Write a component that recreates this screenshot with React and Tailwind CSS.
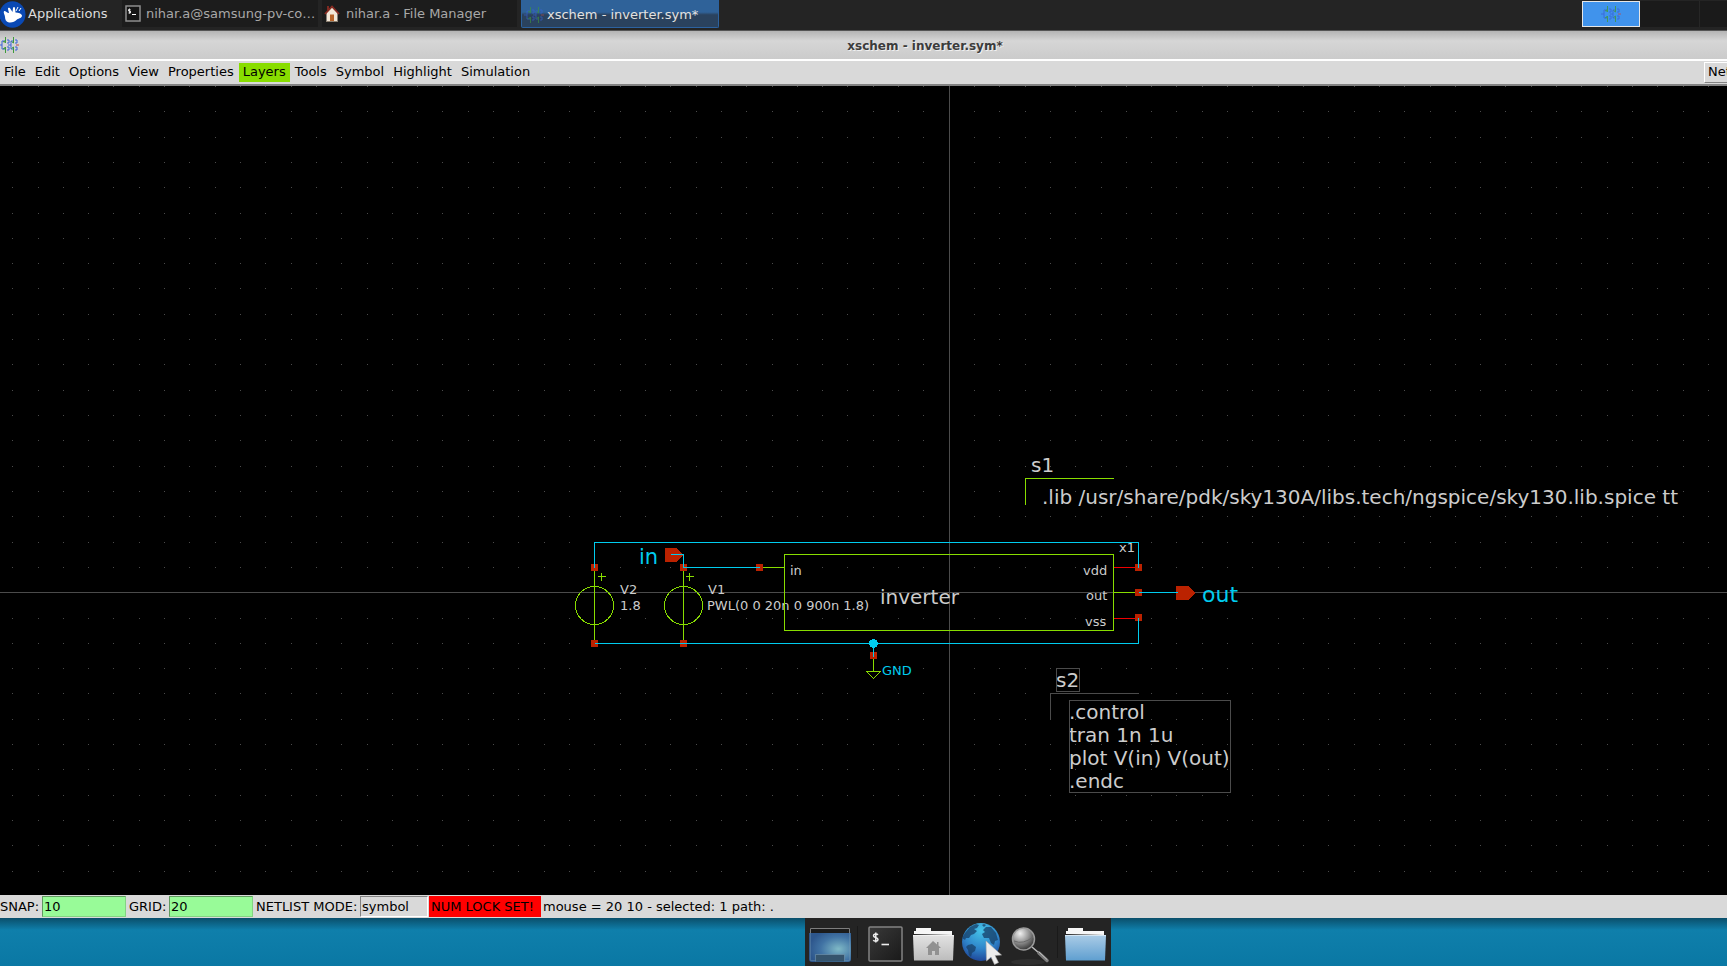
import React from "react";

const GREEN = "#88dd00";
const CYAN = "#00ccee";
const PIN = "#bb2200";
const GREY = "#4b4b4b";
const TEXT = "#cccccc";

const MENUS = ["File", "Edit", "Options", "View", "Properties", "Layers", "Tools", "Symbol", "Highlight", "Simulation"];

const STEP = 25.31;
const COLS = Array.from({ length: 110 }, (_, i) => Math.floor(12.7 + i * STEP));
const ROWS = Array.from({ length: 60 }, (_, i) => Math.floor(0.5 + i * STEP));

const PINS = [
  [594, 481], [594, 557], [683, 481], [683, 557], [759, 481],
  [1138, 481], [1138, 506], [1138, 531], [873, 569],
];

const LABELS = [
  { x: 620, y: 508, t: "V2" },
  { x: 620, y: 524, t: "1.8" },
  { x: 708, y: 508, t: "V1" },
  { x: 707, y: 524, t: "PWL(0 0 20n 0 900n 1.8)" },
  { x: 790, y: 489, t: "in" },
  { x: 1083, y: 489, t: "vdd" },
  { x: 1086, y: 514, t: "out" },
  { x: 1085, y: 540, t: "vss" },
  { x: 1119, y: 466, t: "x1" },
  { x: 882, y: 589, t: "GND", fill: CYAN },
  { x: 880, y: 518, t: "inverter", size: 20 },
  { x: 639, y: 478, t: "in", fill: CYAN, size: 21 },
  { x: 1202, y: 516, t: "out", fill: CYAN, size: 22 },
  { x: 1031, y: 386, t: "s1", size: 20 },
  { x: 1042, y: 418, t: ".lib /usr/share/pdk/sky130A/libs.tech/ngspice/sky130.lib.spice tt", size: 20 },
  { x: 1056, y: 601, t: "s2", size: 20 },
  { x: 1069, y: 633, t: ".control", size: 20 },
  { x: 1069, y: 656, t: "tran 1n 1u", size: 20 },
  { x: 1069, y: 679, t: "plot V(in) V(out)", size: 20 },
  { x: 1069, y: 702, t: ".endc", size: 20 },
];

function XschemIcon({ className }) {
  return (
    <svg className={className} width="20" height="16" viewBox="0 0 20 16" fill="none" aria-hidden="true">
      <path d="M0 8h3M3 4v8M3 4h3M3 12h3M8 3h2v3H8M8 10h2v3H8M9 8h3M12 4v8M12 4h2M12 12h2M16 3h2v3h-2M16 10h2v3h-2" stroke="#3b63d8" />
      <path d="M6.500 0v6l-1.500-1.500M6.500 16v-6l-1.500 1.500M6 4l-2 1M6 11l-2 1M14.500 0v6l-2-1.500M14.500 16v-6l-2 1.500" stroke="#3f9a3a" />
      <path d="M17 8h3" stroke="#c04a4a" />
    </svg>
  );
}

function MouseLogo() {
  return (
    <svg width="26" height="27" viewBox="0 0 26 27" aria-hidden="true" className="shrink-0">
      <ellipse cx="12.500" cy="13.500" rx="13" ry="13.200" fill="#0a49b4" />
      <path d="M4 10c2 0 3 2 5 2l-1-4c0-2 2-1 2.500 0l2 3 .5-4c.5-1.500 2-1 2 .5l.5 4c3 0 6 1 6.500 3 .3 2-3 3-5 4-2 2-5 3.500-8 3-3-.5-4-3-4-5.500 0-2-2-4-1-6z" fill="#fff" />
      <path d="M16 10l2-4M19 10l2-3" stroke="#fff" strokeWidth="1" />
    </svg>
  );
}

function SmallTerminal() {
  return (
    <svg width="16" height="17" viewBox="0 0 16 17" aria-hidden="true" className="shrink-0">
      <rect x="1" y="1" width="14" height="15" fill="#151515" stroke="#8d8d8d" strokeWidth="1.500" />
      <path d="M5.500 4.500H3.500v1.500h2v2h-2M4.500 3.500v5" stroke="#ddd" fill="none" />
      <path d="M7 9.500h4" stroke="#fff" />
    </svg>
  );
}

function House() {
  return (
    <svg width="16" height="17" viewBox="0 0 16 17" aria-hidden="true" className="shrink-0">
      <path d="M3 1h2v4H3z" fill="#7c2a22" />
      <path d="M2.500 8L8 2.500 13.500 8v8h-11z" fill="#f3e7d8" />
      <path d="M1 9l7-7.500L15 9" stroke="#8a2b22" strokeWidth="1.800" fill="none" />
      <path d="M6 9.500h4V16H6z" fill="#b8642a" />
      <path d="M2 16.500h12" stroke="#8b7f70" />
    </svg>
  );
}

function Folder({ blue, home }) {
  const id = blue ? "fb" : "fg";
  return (
    <svg width="42" height="36" viewBox="0 0 42 36" aria-hidden="true">
      <defs>
        <linearGradient id={id} x1="0" y1="0" x2="0" y2="1">
          <stop offset="0" stopColor={blue ? "#a9cbe6" : "#e2e2e2"} />
          <stop offset="1" stopColor={blue ? "#5f9fd0" : "#bcbcbc"} />
        </linearGradient>
      </defs>
      <path d="M1 8V5h2V2h15v3h21v4z" fill="#f6f6f6" />
      <path d="M0 9h41v2H0z" fill="#fff" />
      <path d="M0 9.500h41l-1 25H1z" fill={"url(#" + id + ")"} />
      {home && <path d="M20 15l-7 7h2v7h4v-4h3v4h4v-7h2l-2.500-2.500V16H24v2.500z" fill="#919191" />}
    </svg>
  );
}

function ShowDesktop() {
  return (
    <svg width="42" height="36" viewBox="0 0 42 36" aria-hidden="true">
      <defs>
        <radialGradient id="sd" cx=".7" cy=".55" r=".7">
          <stop offset="0" stopColor="#7fb9c6" />
          <stop offset=".6" stopColor="#4173a4" />
          <stop offset="1" stopColor="#2d568c" />
        </radialGradient>
      </defs>
      <path d="M1.500 7V1.500h39V7" fill="#1b1b1b" stroke="#7d7d7d" />
      <path d="M0 6h42v26q0 3-3 3H3q-3 0-3-3z" fill="url(#sd)" />
      <path d="M1.500 6v27.500h39V6" stroke="#7ea0b8" strokeOpacity=".35" fill="none" />
      <path d="M6.500 34.500v-7h29v7" fill="#35546d" stroke="#7fa0b5" strokeOpacity=".5" />
    </svg>
  );
}

function Terminal() {
  return (
    <svg width="36" height="36" viewBox="0 0 36 36" aria-hidden="true">
      <defs>
        <linearGradient id="tm" x1="0" y1="0" x2="1" y2="1">
          <stop offset="0" stopColor="#3a3a3a" />
          <stop offset="1" stopColor="#191919" />
        </linearGradient>
      </defs>
      <rect x="1" y="1" width="33" height="34" rx="1" fill="url(#tm)" stroke="#838383" strokeWidth="1.500" />
      <path d="M10 8.800C9 7.600 5.500 7.600 5.500 9.700s4.500 1.500 4.500 3.700-3.500 2.200-4.800.9M7.800 6.500v10" stroke="#eee" strokeWidth="1.500" fill="none" />
      <path d="M13.500 18.500h7.500" stroke="#eee" strokeWidth="1.600" />
    </svg>
  );
}

function Globe() {
  return (
    <svg width="44" height="44" viewBox="0 0 44 44" aria-hidden="true">
      <defs>
        <radialGradient id="gl" cx=".5" cy=".2" r=".85">
          <stop offset="0" stopColor="#45c3e8" />
          <stop offset=".55" stopColor="#2f86cb" />
          <stop offset="1" stopColor="#1d3f93" />
        </radialGradient>
      </defs>
      <circle cx="20" cy="20" r="19" fill="url(#gl)" />
      <path d="M4 11l5-6 6-3 3 1-2 3-3 1 3 2-3 3-3 1-2 3-3 0-1 2-3-2zM7 23l4-1 4 3-1 4-3 2-1 4-2-2-1-5-2-3zM22 8l3-3 5 0 5 6 2 7-3 1-1 4-3-2-2-5-5 0-2-4 3-2zM21 3l2-1 2 1-2 2z" fill="#173f67" fillOpacity=".75" />
      <path d="M25 19l.5 20 4.500-4 3.500 7.500 4-2-3.500-7 6.500-.5z" fill="#ececec" stroke="#a9a9a9" strokeWidth=".6" />
    </svg>
  );
}

function Magnifier() {
  return (
    <svg width="40" height="40" viewBox="0 0 40 40" aria-hidden="true">
      <defs>
        <radialGradient id="mg" cx=".35" cy=".25" r=".75">
          <stop offset="0" stopColor="#f0f0f0" />
          <stop offset=".5" stopColor="#9a9a9a" />
          <stop offset="1" stopColor="#3c3c3c" />
        </radialGradient>
      </defs>
      <ellipse cx="17" cy="36" rx="17" ry="3" fill="#2f2f2f" />
      <path d="M21 21l7 6" stroke="#bdbdbd" strokeWidth="1.500" />
      <path d="M28 27l8 7.500" stroke="#7c7c7c" strokeWidth="3.500" strokeLinecap="round" />
      <path d="M28 26l8 7.500" stroke="#c6c6c6" strokeWidth="1" strokeLinecap="round" />
      <circle cx="12.500" cy="13" r="11" fill="url(#mg)" stroke="#9a9a9a" strokeWidth="1.500" />
      <path d="M3 15q9 4 19-4" stroke="#6a6a6a" fill="none" />
    </svg>
  );
}

function Taskbar() {
  return (
    <header className="flex h-[31px] shrink-0 items-start border-b border-[#555555] bg-[#242424] text-[#c4c4c4]">
      <button type="button" className="flex h-[28px] w-[122px] shrink-0 items-center gap-0.5 text-[#dcdcdc]">
        <MouseLogo />
        Applications
      </button>
      <nav className="flex gap-1" aria-label="Windows">
        <button type="button" className="flex h-[27px] w-[196px] items-center gap-[5px] overflow-hidden bg-[#1c1c1c] px-[3px] whitespace-nowrap text-[#a8a8a8]">
          <SmallTerminal />
          nihar.a@samsung-pv-co…
        </button>
        <button type="button" className="flex h-[27px] w-[195px] items-center gap-1.5 overflow-hidden bg-[#1c1c1c] px-[2px] whitespace-nowrap text-[#a8a8a8]">
          <House />
          nihar.a - File Manager
        </button>
        <button type="button" className="flex h-[28px] w-[198px] items-center gap-[3px] overflow-hidden rounded-b-xs border border-t-0 border-[#2c62a0] bg-linear-to-b from-[#2f6299] from-45% to-[#2a425e] to-55% px-0.5 pt-0.5 whitespace-nowrap text-[#e2e2e2]">
          <XschemIcon className="shrink-0 opacity-60" />
          xschem - inverter.sym*
        </button>
      </nav>
      <div className="ml-auto flex h-[28px] pt-px">
        <button type="button" aria-label="Workspace 1" className="flex h-[26px] w-[58px] items-center justify-center border border-[#e6e6e6] bg-[#4093ec]">
          <XschemIcon className="opacity-80" />
        </button>
        <button type="button" aria-label="Workspace 2" className="h-[26px] w-[60px] border-r border-[#262626] bg-[#1a1a1a]" />
        <button type="button" aria-label="Workspace 3" className="h-[26px] w-[27px] bg-[#1a1a1a]" />
      </div>
    </header>
  );
}

function TitleBar() {
  return (
    <div className="flex h-[30px] shrink-0 items-center border-b-2 border-white bg-linear-to-b from-[#b4b4b4] via-[#d6d6d6] via-35% to-[#cbcbcb]">
      <XschemIcon className="-ml-px shrink-0" />
      <h1 className="grow pt-0.5 pl-[104px] text-center text-xs font-bold text-[#3c3c3c] [text-shadow:1px_1px_0_#f0f0f0]">xschem - inverter.sym*</h1>
    </div>
  );
}

function MenuBar() {
  return (
    <nav className="flex h-[25px] shrink-0 items-center gap-px overflow-hidden border-b-2 border-[#828282] bg-[#d9d9d9] text-black" aria-label="Menu">
      {MENUS.map((m) => (
        <button
          key={m}
          type="button"
          className={m === "Layers" ? "h-[19px] shrink-0 bg-[#88dd00] px-1 pb-0.5" : "h-[19px] shrink-0 px-1 pb-0.5"}
        >
          {m}
        </button>
      ))}
      <button type="button" className="-mr-[37px] ml-auto h-[21px] w-[60px] shrink-0 border border-t-white border-r-[#828282] border-b-[#828282] border-l-white pb-0.5 pl-[3px] text-left">
        Netlist
      </button>
    </nav>
  );
}

function Schematic() {
  return (
    <main className="relative min-h-[700px] grow overflow-hidden bg-black">
      <svg className="absolute inset-0 h-full w-full font-['DejaVu_Sans',sans-serif]" role="img" aria-label="Schematic">
        <g fill="#4b4b4b" shapeRendering="crispEdges">
          {ROWS.map((y) => COLS.map((x) => <rect key={x + "-" + y} x={x} y={y} width="1" height="1" />))}
          <rect x="949" y="0" width="1" height="100%" />
          <rect x="0" y="506" width="100%" height="1" />
        </g>
        {LABELS.map((l) => (
          <text key={l.x + "-" + l.y} x={l.x} y={l.y} fontSize={l.size || 13} fill={l.fill || TEXT}>
            {l.t}
          </text>
        ))}
        <g transform="translate(.5 .5)" fill="none" shapeRendering="crispEdges">
          <g stroke={GREEN}>
            <path d="M594 481V557M683 481V557M759 481H784M1113 506H1138" />
            <rect x="784" y="468" width="329" height="76" />
            <circle cx="594" cy="519" r="19" />
            <circle cx="683" cy="519" r="19" />
            <path d="M597 490h8M601 486v8M685 490h8M689 486v8" />
            <path d="M873 569V585M866 585H880L873 592Z" />
            <path d="M1025 418V392H1113" />
          </g>
          <path d="M1113 481H1138M1113 532H1138" stroke="#f00000" />
          <g stroke={GREY}>
            <path d="M1050 633V607H1138" />
            <rect x="1056" y="582" width="23" height="23" />
            <rect x="1069" y="614" width="161" height="92" />
          </g>
          <g fill={PIN}>
            {PINS.map(([x, y]) => (
              <rect key={x + "-" + y} x={x - 3.5} y={y - 3.5} width="7" height="7" />
            ))}
            <path d="M664.500 461.500h11l8 7-8 7h-11z" />
            <path d="M1175.500 499.500h12l8 7-8 7h-12z" />
          </g>
          <path d="M594 481V456H1138V481M594 557H1138V531M683 481H759M670 468H683V481M1138 506H1177M873 557V570" stroke={CYAN} />
          <circle cx="873" cy="557" r="4.500" fill={CYAN} />
        </g>
      </svg>
    </main>
  );
}

function StatusBar() {
  const green = "h-[21px] border border-t-[#5f9a5f] border-r-[#83d383] border-b-[#83d383] border-l-[#5f9a5f] bg-[#98fb98] pl-px outline-none";
  return (
    <footer className="flex h-[23px] shrink-0 items-center bg-[#d9d9d9] whitespace-nowrap text-black">
      <label className="flex w-[129px] items-center justify-between pr-[3px]">
        SNAP:
        <input className={green + " w-[84px]"} defaultValue="10" />
      </label>
      <label className="flex w-[127px] items-center justify-between pr-[3px]">
        GRID:
        <input className={green + " w-[84px]"} defaultValue="20" />
      </label>
      <label className="flex w-[172px] items-center justify-between">
        NETLIST MODE:
        <input className="h-[21px] w-[68px] border border-t-[#828282] border-r-white border-b-white border-l-[#828282] bg-[#d9d9d9] pl-px outline-none" defaultValue="symbol" />
      </label>
      <span className="ml-px flex h-[21px] w-[112px] items-center bg-[#ff0000] pl-0.5">NUM LOCK SET!</span>
      <span className="pl-0.5">mouse = 20 10 - selected: 1 path: .</span>
    </footer>
  );
}

function Dock() {
  const sep = "h-8 w-px bg-[#1a1a1a]";
  return (
    <div className="flex h-[48px] shrink-0 justify-center overflow-hidden bg-linear-to-b from-[#0a4f6b] via-[#0f7fab] via-25% to-[#0a78a4] pl-[188px]">
      <nav className="flex items-start bg-[#242424] px-1 pt-2" aria-label="Dock">
        <button type="button" aria-label="Show desktop" className="w-[42px] pt-px"><ShowDesktop /></button>
        <div className={sep + " mr-2.5 ml-1.5"} />
        <button type="button" aria-label="Terminal" className="w-[36px]"><Terminal /></button>
        <button type="button" aria-label="File manager" className="ml-[9px] w-[42px]"><Folder home /></button>
        <button type="button" aria-label="Web browser" className="-mt-1 ml-1.5 w-[44px]"><Globe /></button>
        <button type="button" aria-label="Application finder" className="ml-1.5 w-[40px]"><Magnifier /></button>
        <div className={sep + " mr-[7px] ml-1.5"} />
        <button type="button" aria-label="Folder" className="w-[42px]"><Folder blue /></button>
      </nav>
    </div>
  );
}

export default function App() {
  return (
    <div className="flex min-h-screen flex-col overflow-hidden font-['DejaVu_Sans',sans-serif] text-[13px] leading-4">
      <Taskbar />
      <TitleBar />
      <MenuBar />
      <Schematic />
      <StatusBar />
      <Dock />
    </div>
  );
}
